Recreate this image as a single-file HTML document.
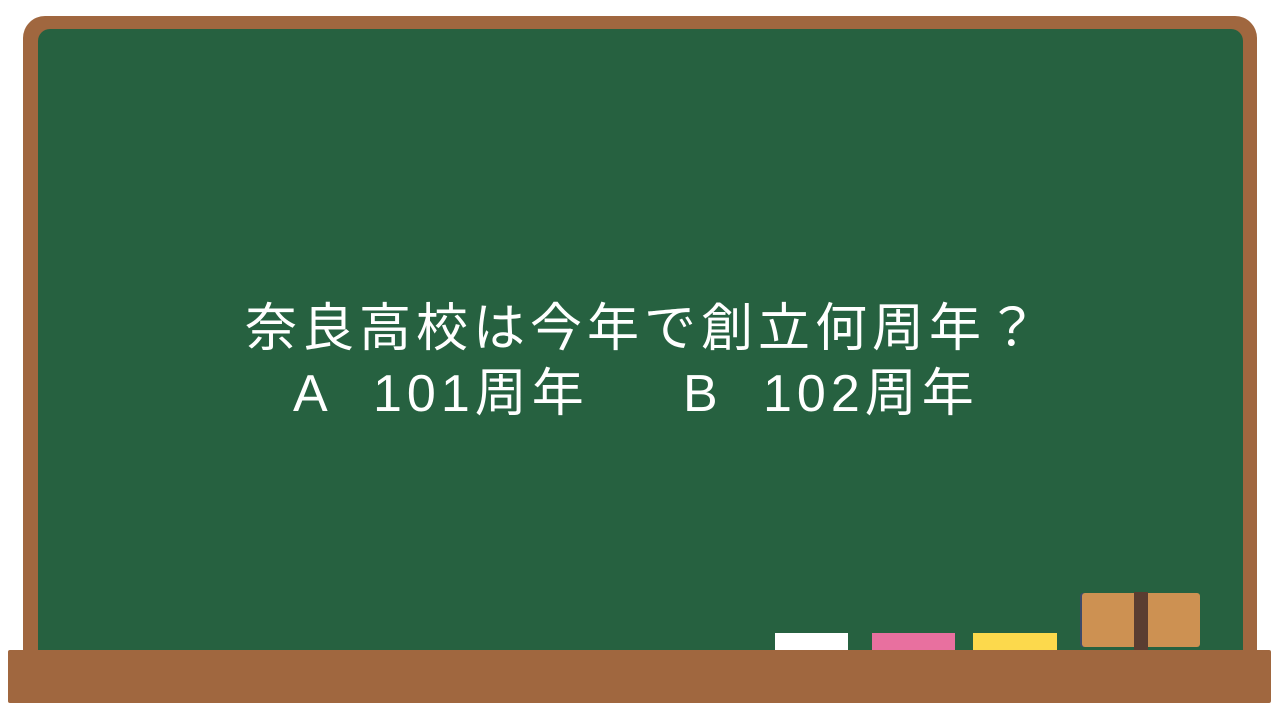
<!DOCTYPE html>
<html><head><meta charset="utf-8"><style>
body{margin:0;width:1280px;height:720px;background:#fff;position:relative;overflow:hidden}
.frame{position:absolute;left:23px;top:16px;width:1234px;height:660px;background:#a0673f;border-radius:22px}
.board{position:absolute;left:38px;top:29px;width:1205px;height:640px;background:#266140;border-radius:12px}
.tray{position:absolute;left:8px;top:650px;width:1263px;height:53px;background:#a0673f;border-radius:2px}
.c{position:absolute;top:633px;height:17px}
.txt{position:absolute;left:0;width:1280px;text-align:center;color:#fff;font-family:"Liberation Sans","Noto Sans CJK JP",sans-serif;font-size:52px;line-height:65px;white-space:pre}
.s{position:absolute;top:362px;color:#fff;font-family:"Liberation Sans","Noto Sans CJK JP",sans-serif;font-size:52px;line-height:65px;white-space:pre;letter-spacing:5px}
</style></head><body>
<div class="frame"></div>
<div class="board"></div>
<div class="c" style="left:775px;width:73px;background:#fff"></div>
<div class="c" style="left:872px;width:83px;background:#e8709f"></div>
<div class="c" style="left:973px;width:84px;background:#fcd94c"></div>
<div style="position:absolute;left:1082px;top:593px;width:118px;height:54px;background:#cd9152;border-radius:3px;box-shadow:-2px 0 0 #3d4b6a"></div>
<div style="position:absolute;left:1134px;top:592px;width:14px;height:58px;background:#5a3d31"></div>
<div class="tray"></div>
<div class="txt" style="top:297px;letter-spacing:5px;padding-left:8px;box-sizing:border-box">奈良高校は今年で創立何周年？</div>
<div class="s" style="left:293px">A</div>
<div class="s" style="left:373px">101周年</div>
<div class="s" style="left:683px">B</div>
<div class="s" style="left:763px">102周年</div>
</body></html>
